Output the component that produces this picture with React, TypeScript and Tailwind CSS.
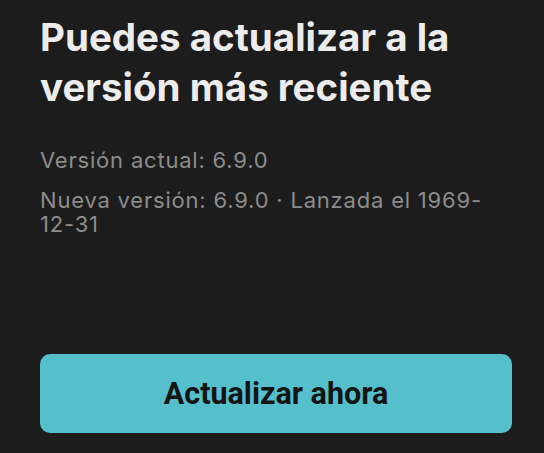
export default function App() {
  return (
    <div className="flex h-[453px] w-[544px] flex-col bg-[#1c1c1c] pb-[20px] pl-[40px] pr-[32px] pt-[12px] font-['Inter',sans-serif]">
      <h1 className="text-[38.5px] font-bold leading-[50px] text-[#ececec]">
        Puedes actualizar a la versión más reciente
      </h1>
      <p className="mt-[36px] text-[22px] leading-[24px] tracking-[0.8px] text-[#8c8c8c]">Versión actual: 6.9.0</p>
      <p className="mt-[16px] text-[22px] leading-[24px] tracking-[0.8px] text-[#8c8c8c]">
        Nueva versión: 6.9.0 · Lanzada el 1969-12-31
      </p>
      <div className="flex-1" />
      <button className="h-[79px] w-full rounded-[10px] bg-[#55bfcc] font-['Roboto',sans-serif] text-[30.5px] font-bold text-[#141414]">
        Actualizar ahora
      </button>
    </div>
  );
}
